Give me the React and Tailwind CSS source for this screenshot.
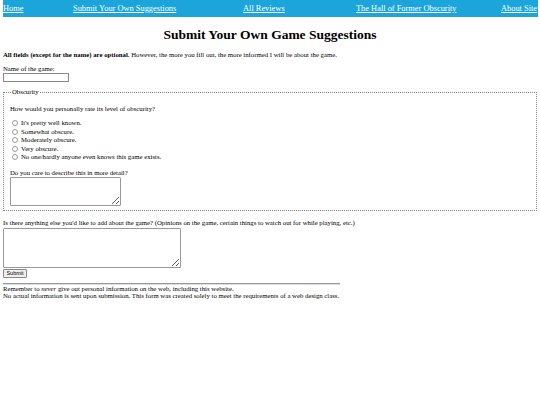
const navLinks = [
  { label: 'Home', w: 'w-[70px]' },
  { label: 'Submit Your Own Suggestions', w: 'w-[170px]' },
  { label: 'All Reviews', w: 'w-[113px]' },
  { label: 'The Hall of Former Obscurity', w: 'w-[145px]' },
  { label: 'About Site', w: 'w-[37px]' },
];

const options = [
  "It's pretty well known.",
  'Somewhat obscure.',
  'Moderately obscure.',
  'Very obscure.',
  'No one/hardly anyone even knows this game exists.',
];

export default function App() {
  return (
    <div className="min-h-screen bg-white px-[3px] text-black font-['Liberation_Serif',serif] text-[6.75px] leading-[8.5px]">
      {/* Nav */}
      <nav className="flex h-[17px] w-[535px] items-center bg-[#1ba5da]">
        {navLinks.map((l) => (
          <a
            key={l.label}
            href="#"
            className={`${l.w} shrink-0 whitespace-nowrap text-[8.4px] leading-[10px] text-white underline`}
          >
            {l.label}
          </a>
        ))}
      </nav>

      <h1 className="mt-[9px] mb-[8px] text-center text-[13.5px] font-bold leading-[17px]">
        Submit Your Own Game Suggestions
      </h1>

      <p>
        <b>All fields (except for the name) are optional.</b> However, the more you fill out, the more
        informed I will be about the game.
      </p>

      <div className="mt-[5px]">
        <div>Name of the game:</div>
        <input type="text" className="block h-[9px] w-[66px] border border-[#888] bg-white" />
      </div>

      {/* Obscurity */}
      <fieldset className="mt-[6px] w-[534px] border border-dotted border-[#888] px-[6px] pb-[4px]">
        <legend className="px-[1px] ml-[1px]">Obscurity</legend>
        <p className="mt-[8px]">How would you personally rate its level of obscurity?</p>
        <div className="mt-[6px] flex flex-col">
          {options.map((o) => (
            <label key={o} className="flex items-center gap-[3px] pl-[2px]">
              <span className="h-[6px] w-[6px] rounded-full border border-[#999] bg-white" />
              {o}
            </label>
          ))}
        </div>
        <p className="mt-[7px]">Do you care to describe this in more detail?</p>
        <textarea className="block h-[29px] w-[111px] rounded-[1px] border border-[#999]" />
      </fieldset>

      <p className="mt-[8px]">
        Is there anything else you'd like to add about the game? (Opinions on the game, certain things to
        watch out for while playing, etc.)
      </p>
      <textarea className="block h-[40px] w-[178px] rounded-[1px] border border-[#999]" />
      <button className="mt-[1px] block h-[9px] w-[24px] rounded-[1px] border border-[#888] bg-[#efefef] font-['Liberation_Sans',sans-serif] text-[5.5px] leading-[7px]">
        Submit
      </button>

      <div className="mt-[5px] h-[2px] w-[337px] border-t border-[#999] border-b border-b-[#ddd]" />
      <p className="leading-[7.5px]">
        Remember to <i className="leading-[7.5px]">never</i> give out personal information on the web, including
        this website.
        <br />
        No actual information is sent upon submission. This form was created solely to meet the requirements
        of a web design class.
      </p>
    </div>
  );
}
